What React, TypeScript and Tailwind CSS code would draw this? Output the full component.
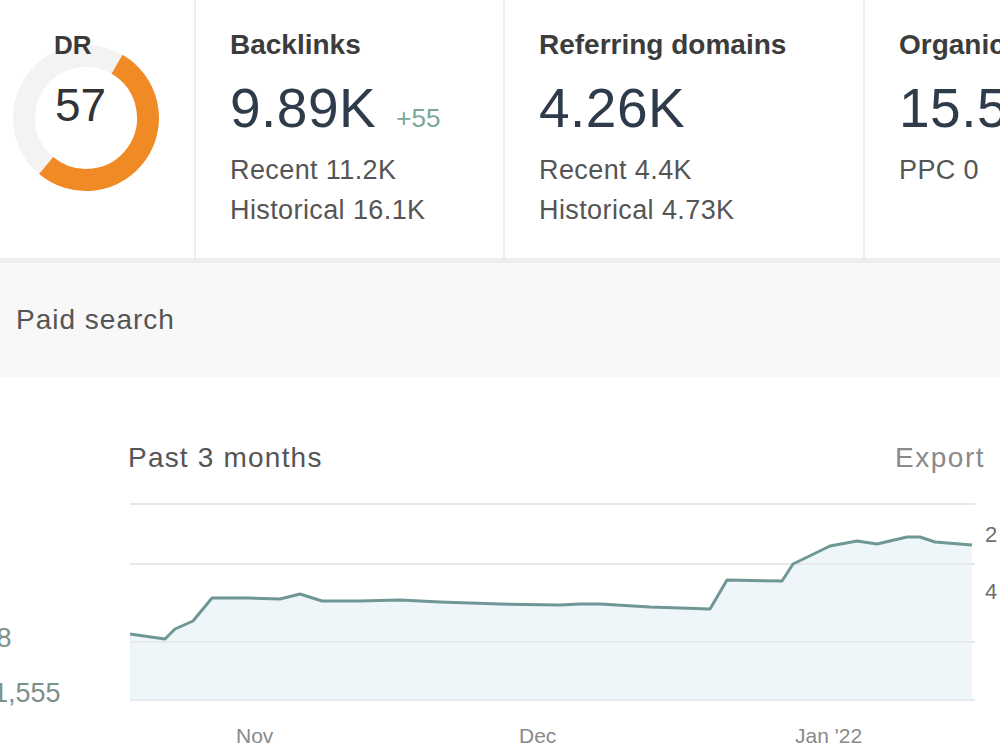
import React from "react";

const font = { fontFamily: '"Liberation Sans", Arial, sans-serif' };

// Line series in plot coordinates (845 x 220)
const points: [number, number][] = [
  [0, 143], [35, 148], [45, 138], [63, 130], [82, 107], [120, 107],
  [150, 108], [170, 103], [192, 110], [230, 110], [270, 109], [310, 111],
  [370, 113], [430, 114], [450, 113], [470, 113], [520, 116], [580, 118],
  [597, 89], [652, 90], [663, 73], [700, 55], [727, 50], [747, 53],
  [777, 46], [790, 46], [805, 51], [842, 54],
];

const gridLines = [13, 73, 151, 209];

function arcPath(cx: number, cy: number, r: number, from: number, to: number) {
  const rad = (deg: number) => ((deg - 90) * Math.PI) / 180;
  const x1 = cx + r * Math.cos(rad(from));
  const y1 = cy + r * Math.sin(rad(from));
  const x2 = cx + r * Math.cos(rad(to));
  const y2 = cy + r * Math.sin(rad(to));
  const large = to - from > 180 ? 1 : 0;
  return `M ${x1} ${y1} A ${r} ${r} 0 ${large} 1 ${x2} ${y2}`;
}

function DrGauge() {
  return (
    <div className="relative w-[196px] h-full border-r-2 border-[#eeeeee] shrink-0">
      <svg className="absolute inset-0" width="196" height="258">
        <path
          d={arcPath(86, 118, 62, 220, 390)}
          fill="none"
          stroke="#f3f3f3"
          strokeWidth="22"
        />
        <path
          d={arcPath(86, 118, 62, 30, 220)}
          fill="none"
          stroke="#f08a25"
          strokeWidth="22"
        />
      </svg>
      <div className="relative flex flex-col">
        <span className="ml-[54px] mt-[32px] text-[26px] font-bold leading-none text-[#3a3a3a]">
          DR
        </span>
        <span className="ml-[55px] mt-[24px] text-[46px] leading-none text-[#333]">
          57
        </span>
      </div>
    </div>
  );
}

interface StatProps {
  title: string;
  value: string;
  delta?: string;
  lines: string[];
  width?: string;
}

function Stat({ title, value, delta, lines, width }: StatProps) {
  return (
    <div
      className={`${width ?? "flex-1"} h-full pl-[34px] border-r-2 border-[#eeeeee] shrink-0 flex flex-col whitespace-nowrap`}
    >
      <span className="mt-[31px] text-[28px] font-bold leading-none text-[#3c3c3c]">
        {title}
      </span>
      <div className="mt-[22px] flex items-baseline gap-[20px]">
        <span className="text-[55px] leading-none tracking-[0.5px] text-[#2e3b4a]">
          {value}
        </span>
        {delta && (
          <span className="text-[26px] leading-none text-[#7ba796]">{delta}</span>
        )}
      </div>
      {lines.map((line, i) => (
        <span
          key={line}
          className={`${i === 0 ? "mt-[21px]" : "mt-[13px]"} text-[27px] leading-none tracking-[0.4px] text-[#555]`}
        >
          {line}
        </span>
      ))}
    </div>
  );
}

function TrafficChart() {
  const linePath = points.map(([x, y], i) => `${i ? "L" : "M"} ${x} ${y}`).join(" ");
  const areaPath = `${linePath} L 842 209 L 0 209 Z`;

  return (
    <div className="flex h-[220px]">
      <div className="w-[130px] shrink-0 overflow-hidden relative text-[27px] leading-none text-[#7c918a]">
        <span className="absolute left-[-56px] top-[134px]">1,238</span>
        <span className="absolute left-[-7px] top-[189px]">1,555</span>
      </div>
      <svg width="845" height="220" className="shrink-0">
        <path d={areaPath} fill="#eef6fa" />
        {gridLines.map((y) => (
          <line key={y} x1="0" x2="845" y1={y} y2={y} stroke="#e6e8e9" strokeWidth="2" />
        ))}
        <path d={linePath} fill="none" stroke="#6f9796" strokeWidth="3" strokeLinejoin="round" />
      </svg>
      <div className="flex-1 relative text-[22px] leading-none text-[#6f6f6f]">
        <span className="absolute left-[10px] top-[33px]">2</span>
        <span className="absolute left-[10px] top-[90px]">4</span>
      </div>
    </div>
  );
}

export default function App() {
  return (
    <div className="w-full h-[751px] overflow-hidden bg-white" style={font}>
      <div className="flex h-[258px] w-[1000px]">
        <DrGauge />
        <Stat
          title="Backlinks"
          value="9.89K"
          delta="+55"
          lines={["Recent 11.2K", "Historical 16.1K"]}
          width="w-[309px]"
        />
        <Stat
          title="Referring domains"
          value="4.26K"
          lines={["Recent 4.4K", "Historical 4.73K"]}
          width="w-[360px]"
        />
        <Stat title="Organic keywords" value="15.5K" lines={["PPC 0"]} width="w-[240px]" />
      </div>

      <div className="h-[119px] border-t-[5px] border-[#eeeeee] bg-[#f8f8f8] flex items-center pl-[16px]">
        <span className="text-[28px] tracking-[1px] text-[#555]">Paid search</span>
      </div>

      <div className="pt-[56px]">
        <div className="h-[50px] flex items-center justify-between pl-[128px] pr-[15px]">
          <span className="text-[28px] tracking-[1.2px] text-[#555]">Past 3 months</span>
          <span className="text-[28px] tracking-[1.5px] text-[#8a8a8a]">Export</span>
        </div>
        <div className="mt-[8px]">
          <TrafficChart />
        </div>
        <div className="relative h-[40px] text-[21px] text-[#8a8a8a]">
          <span className="absolute left-[236px] top-[9px]">Nov</span>
          <span className="absolute left-[519px] top-[9px]">Dec</span>
          <span className="absolute left-[795px] top-[9px]">Jan '22</span>
        </div>
      </div>
    </div>
  );
}
